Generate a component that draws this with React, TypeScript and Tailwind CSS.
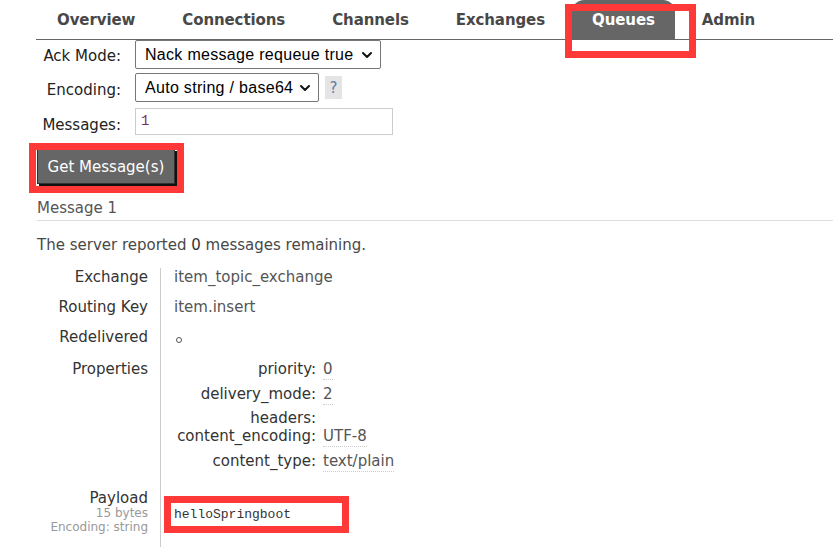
import { ChevronDown } from "lucide-react";

const tabs = ["Overview", "Connections", "Channels", "Exchanges", "Queues", "Admin"];

const props = [
  { k: "priority:", v: "0", h: "h-[25px]" },
  { k: "delivery_mode:", v: "2", h: "h-[24px]" },
  { k: "headers:", v: "", h: "h-[18px]" },
  { k: "content_encoding:", v: "UTF-8", h: "h-[25px]" },
  { k: "content_type:", v: "text/plain", h: "h-[25px]" },
];

function Select({ label, width }: { label: string; width: string }) {
  return (
    <div
      className={`${width} h-[29px] border border-[#767676] rounded-[2px] flex items-center justify-between pl-[9px] pr-[5px] bg-white font-['Liberation_Sans',sans-serif] text-[16px] tracking-[0.3px] text-black`}
    >
      <span className="leading-none">{label}</span>
      <ChevronDown size={16} strokeWidth={3} className="text-[#111]" />
    </div>
  );
}

export default function App() {
  return (
    <div className="relative w-[833px] h-[547px] overflow-hidden bg-white font-['DejaVu_Sans',sans-serif] text-[15px] leading-[18px] text-[#333]">
      {/* Tabs */}
      <div className="ml-9 h-[40px] border-b border-[#666] flex items-end">
        <div className="flex gap-[7px] pl-px tracking-[-0.1px]">
          {tabs.map((t) => (
            <div
              key={t}
              className={
                t === "Queues"
                  ? "h-[39px] px-5 flex items-center font-bold text-white bg-[#666] rounded-t-[12px]"
                  : "h-[39px] px-5 flex items-center font-bold text-[#484848]"
              }
            >
              {t}
            </div>
          ))}
        </div>
      </div>

      {/* Get messages form */}
      <div className="ml-9">
        <div className="flex gap-[14px]">
          <div className="w-[85px] text-right pt-[7px] text-[#222]">Ack Mode:</div>
          <Select label="Nack message requeue true" width="w-[246px]" />
        </div>
        <div className="flex gap-[14px] mt-[4px]">
          <div className="w-[85px] text-right pt-[8px] text-[#222]">Encoding:</div>
          <div className="flex items-start">
            <Select label="Auto string / base64" width="w-[184px]" />
            <div className="ml-[6px] mt-[3px] w-[17px] h-[23px] bg-[#e4e4e4] flex items-center justify-center text-[#5f79a6]">
              ?
            </div>
          </div>
        </div>
        <div className="flex gap-[14px] mt-[6px]">
          <div className="w-[85px] text-right pt-[8px] text-[#222]">Messages:</div>
          <div className="w-[258px] h-[27px] border border-[#ccc] pl-[5px] pt-[3px] font-['Liberation_Mono',monospace] text-[14px] text-[#7b2d62]">
            1
          </div>
        </div>
      </div>

      <button className="mt-[14px] ml-[37px] h-[35px] w-[138px] bg-[#666] border border-[#333] shadow-[2px_2px_0_#111] text-white text-[15px] flex items-center justify-center">
        Get Message(s)
      </button>

      <div className="mt-[15px] ml-[37px] pb-[3px] border-b border-[#ddd] text-[#555]">Message 1</div>
      <div className="mt-[15px] ml-[37px] text-[#484848]">
        The server reported <span className="text-[#333]">0</span> messages remaining.
      </div>

      {/* Message details */}
      <div className="mt-[14px]">
        <div className="flex h-[30px]">
          <div className="w-[148px] text-right">Exchange</div>
          <div className="ml-[12px] border-l border-[#ccc] pl-[13px] text-[#555]">item_topic_exchange</div>
        </div>
        <div className="flex h-[30px]">
          <div className="w-[148px] text-right">Routing Key</div>
          <div className="ml-[12px] border-l border-[#ccc] pl-[13px] text-[#555]">item.insert</div>
        </div>
        <div className="flex h-[32px]">
          <div className="w-[148px] text-right">Redelivered</div>
          <div className="ml-[12px] border-l border-[#ccc] pl-[15px]">
            <span className="inline-block mt-[9px] w-[6px] h-[6px] rounded-full border border-[#555]" />
          </div>
        </div>
        <div className="flex">
          <div className="w-[148px] text-right">Properties</div>
          <div className="ml-[12px] border-l border-[#ccc] pl-[13px]">
            {props.map((p) => (
              <div key={p.k} className={`flex gap-[7px] ${p.h}`}>
                <div className="w-[142px] text-right">{p.k}</div>
                {p.v && (
                  <span className="self-start text-[#555] border-b border-dotted border-[#ccc] leading-[19px]">
                    {p.v}
                  </span>
                )}
              </div>
            ))}
          </div>
        </div>
        <div className="flex h-[80px]">
          <div className="w-[148px] text-right pt-[13px]">
            <div className="leading-[16px]">Payload</div>
            <div className="text-[12px] leading-[14px] text-[#999]">15 bytes</div>
            <div className="text-[12px] leading-[14px] text-[#999]">Encoding: string</div>
          </div>
          <div className="ml-[12px] border-l border-[#ccc] pl-[13px] pt-[30px]">
            <pre className="font-['Liberation_Mono',monospace] text-[13px] leading-[16px] text-[#333]">helloSpringboot</pre>
          </div>
        </div>
      </div>

      {/* Red annotation boxes */}
      <div className="absolute left-[565px] top-[4px] w-[131px] h-[54px] border-[7px] border-[#ff3838]" />
      <div className="absolute left-[29px] top-[143px] w-[155px] h-[50px] border-[7px] border-[#ff3838]" />
      <div className="absolute left-[164px] top-[496px] w-[185px] h-[37px] border-[7px] border-[#ff3838]" />
    </div>
  );
}
